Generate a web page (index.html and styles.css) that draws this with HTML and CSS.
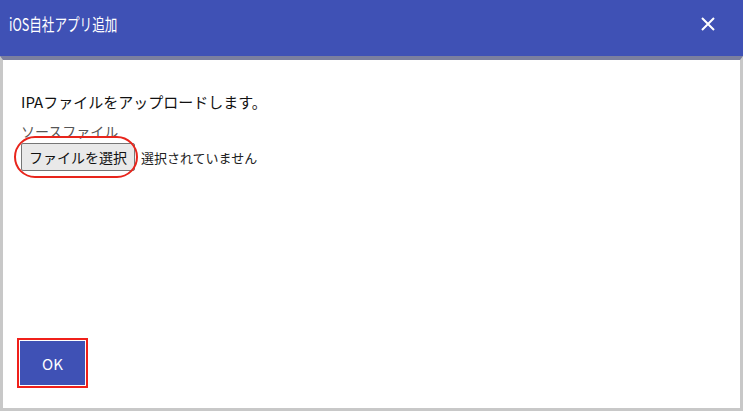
FILE: index.html
```html
<!DOCTYPE html>
<html lang="ja">
<head>
  <meta charset="UTF-8">
  <title>iOS自社アプリ追加</title>
  <link rel="stylesheet" href="styles.css">
</head>
<body>

  <div class="dialog">
    <div class="dialog-header">
      <span class="dialog-title">iOS自社アプリ追加</span>
      <button class="close-btn" aria-label="閉じる">
        <svg width="14" height="14" viewBox="0 0 14 14">
          <path d="M1 1 L13 13 M13 1 L1 13" stroke="#fff" stroke-width="2" fill="none"/>
        </svg>
      </button>
    </div>

    <div class="dialog-body">
      <p class="lead">IPAファイルをアップロードします。</p>
      <div class="field-label">ソースファイル</div>
      <div class="file-row">
        <span class="file-btn-wrap">
          <button class="file-btn">ファイルを選択</button>
          <span class="mark-round"></span>
        </span>
        <span class="file-status">選択されていません</span>
      </div>

      <div class="dialog-footer">
        <button class="ok-btn">OK</button>
      </div>
    </div>
  </div>

</body>
</html>
```

FILE: styles.css
```css
body {
  margin: 0;
  background-color: #fff;
  font-family: 'Noto Sans CJK JP', 'Noto Sans', sans-serif;
  color: #222;
}
.dialog {
  width: 743px;
  height: 411px;
  display: flex;
  flex-direction: column;
}
.dialog-header {
  height: 56px;
  box-sizing: border-box;
  background-color: #3f51b5;
  display: flex;
  align-items: center;
  justify-content: space-between;
  padding: 0 28px 8px 9px;
}
.dialog-title {
  display: inline-block;
  color: #fff;
  font-size: 17px;
  line-height: 20px;
  transform: scaleX(0.74);
  transform-origin: left center;
}
.close-btn {
  background: none;
  border: none;
  padding: 0;
  width: 14px;
  height: 14px;
  cursor: pointer;
}
.close-btn svg {
  display: block;
}
.dialog-body {
  flex: 1;
  display: flex;
  flex-direction: column;
  border: 3px solid #c8c8c8;
  border-top: 4px solid #7b7f9f;
  padding: 32px 18px 23px 18px;
}
.lead {
  margin: 0 0 10px 0;
  font-size: 15px;
  line-height: 20px;
  color: #111;
}
.field-label {
  font-size: 14px;
  line-height: 18px;
  color: #555;
}
.file-row {
  display: flex;
  align-items: center;
  margin-top: 3px;
}
.file-btn-wrap {
  position: relative;
  display: inline-block;
}
.file-btn {
  display: block;
  height: 28px;
  padding: 0 7px;
  font-family: inherit;
  font-size: 14px;
  color: #111;
  background-color: #e9e9e9;
  border: 1px solid #767676;
  border-radius: 2px;
}
.mark-round {
  position: absolute;
  top: -7px;
  bottom: -7px;
  left: -7px;
  right: -3px;
  border: 2px solid #e8251c;
  border-radius: 21px;
}
.file-status {
  margin-left: 6px;
  font-size: 13px;
  color: #222;
}
.dialog-footer {
  margin-top: auto;
}
.ok-btn {
  width: 65px;
  height: 44px;
  margin-left: -1px;
  background-color: #3f51b5;
  color: #fff;
  font-family: inherit;
  font-size: 15px;
  border: none;
  border-radius: 0;
  outline: 2px solid #f0201a;
  outline-offset: 1px;
  cursor: pointer;
}
```
